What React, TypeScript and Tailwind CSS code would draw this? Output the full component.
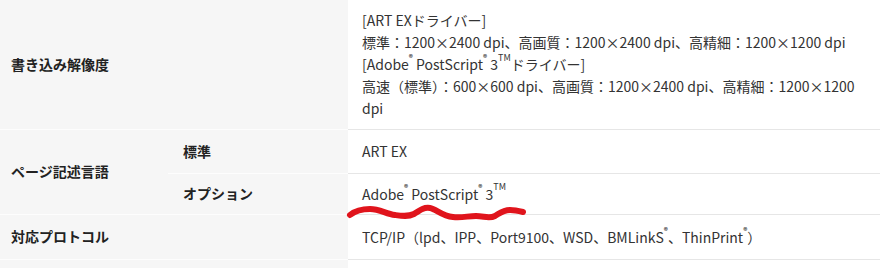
export default function App() {
  const th = 'bg-[#f6f6f6] border-b border-[#fdfdfd] text-left align-middle font-bold text-[14px] text-[#222]'
  const td = 'bg-white border-b border-[#e6e6e6] align-middle text-[14px] leading-[22px] text-[#333] pl-[14px] pr-[14px]'
  const reg = 'text-[8px] align-[5px] font-bold'
  const tm = 'text-[9px] align-[5px]'

  return (
    <div
      className="relative w-[880px] h-[268px] overflow-hidden bg-white"
      style={{ fontFamily: '"Noto Sans CJK JP", "Noto Sans", sans-serif' }}
    >
      <table className="w-full border-collapse table-fixed">
        <colgroup>
          <col className="w-[168px]" />
          <col className="w-[180px]" />
          <col />
        </colgroup>
        <tbody>
          <tr>
            <th colSpan={2} className={`${th} pl-[11px] h-[129px]`}>書き込み解像度</th>
            <td className={`${td} py-[9px]`}>
              [ART EXドライバー]<br />
              標準：1200×2400 dpi、高画質：1200×2400 dpi、高精細：1200×1200 dpi<br />
              [Adobe<sup className={reg}>®</sup> PostScript<sup className={reg}>®</sup> 3<sup className={tm}>TM</sup>ドライバー]<br />
              高速（標準）：600×600 dpi、高画質：1200×2400 dpi、高精細：1200×1200 dpi
            </td>
          </tr>
          <tr>
            <th rowSpan={2} className={`${th} pl-[11px]`}>ページ記述言語</th>
            <th className={`${th} pl-[15px] h-[44px]`}>標準</th>
            <td className={td}>ART EX</td>
          </tr>
          <tr>
            <th className={`${th} pl-[15px] h-[41px]`}>オプション</th>
            <td className={td}>
              Adobe<sup className={reg}>®</sup> PostScript<sup className={reg}>®</sup> 3<sup className={tm}>TM</sup>
            </td>
          </tr>
          <tr>
            <th colSpan={2} className={`${th} pl-[11px] h-[45px]`}>対応プロトコル</th>
            <td className={td}>
              TCP/IP（lpd、IPP、Port9100、WSD、BMLinkS<sup className={reg}>®</sup>、ThinPrint<sup className={reg}>®</sup>）
            </td>
          </tr>
          <tr>
            <th colSpan={2} className={`${th} h-[20px]`}></th>
            <td className={td}></td>
          </tr>
        </tbody>
      </table>

      {/* hand-drawn red underline */}
      <svg className="absolute left-0 top-0 pointer-events-none" width="880" height="268">
        <path
          d="M350 215 C355 211 360 209 370 209 C380 209 386 214 395 215 C402 216 408 217 414 214 C420 210 424 207 430 208 C436 209 442 216 453 217 C462 218 468 216 476 216 C484 216 489 219 495 216 C500 213 503 210 510 210 C515 210 519 211 523 212"
          fill="none"
          stroke="#e0141c"
          strokeWidth="6"
          strokeLinecap="round"
          strokeLinejoin="round"
        />
      </svg>
    </div>
  )
}
